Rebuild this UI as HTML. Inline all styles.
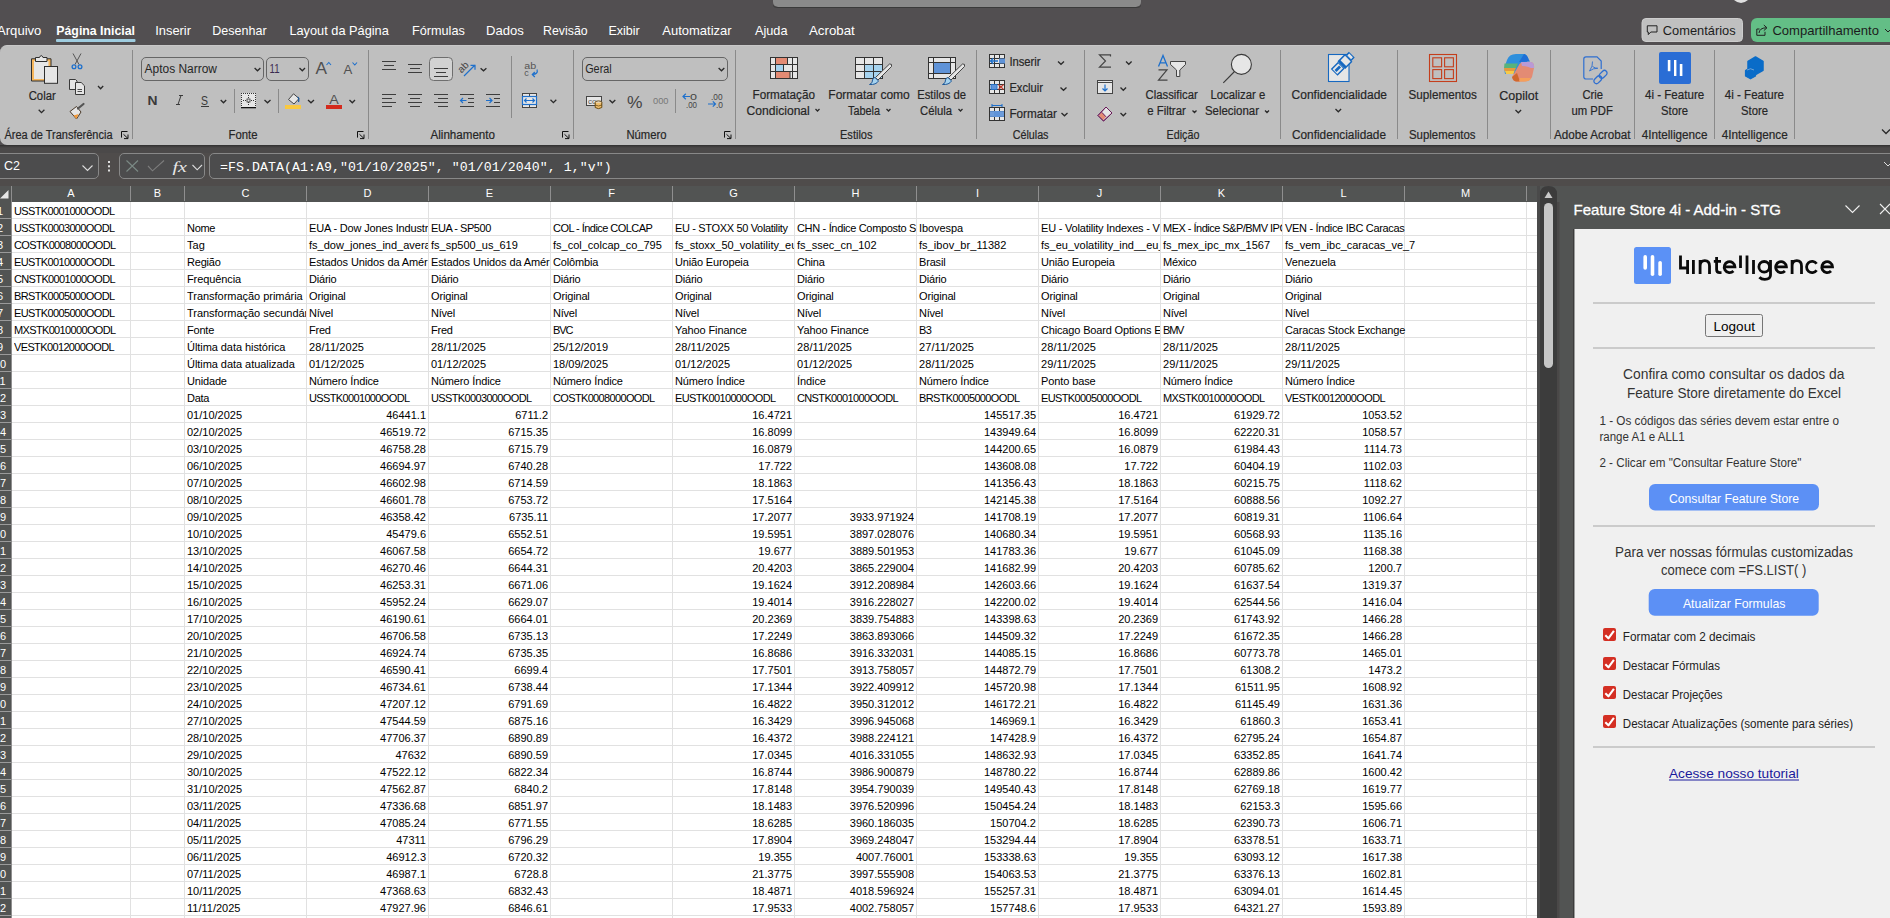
<!DOCTYPE html>
<html><head><meta charset="utf-8">
<style>
*{box-sizing:border-box}
html,body{margin:0;padding:0}
body{width:1890px;height:918px;overflow:hidden;position:relative;background:#524f51;font-family:"Liberation Sans",sans-serif;color:#fff}
.a{position:absolute}
.tab{position:absolute;top:23px;font-size:13px;line-height:15px;color:#fff;white-space:nowrap}
.rib{position:absolute;left:0;top:45px;width:1900px;height:100px;background:#bfbfbf;border-top:1px solid #c8c8c8;border-radius:7px 0 0 7px}
.sep{position:absolute;top:50px;width:1px;height:89px;background:#8e8e8e}
.gl{position:absolute;top:128px;font-size:12px;line-height:14px;color:#202020;white-space:nowrap}
.bl{position:absolute;font-size:12px;line-height:16px;color:#202020;white-space:nowrap;text-align:center}
.fbar{position:absolute;left:0;top:145px;width:1890px;height:41px;background:#4f4c4b}
.box{position:absolute;top:153px;height:26px;border:1px solid #888;border-radius:5px;background:#4c4c4d}
.sheet{position:absolute;left:0;top:202px;width:1537px;height:716px;background:#fff;overflow:hidden;
 background-image:repeating-linear-gradient(to bottom,transparent 0,transparent 16px,#e1e1e1 16px,#e1e1e1 17px)}
.colh{position:absolute;left:0;top:186px;width:1537px;height:16px;background:#525453}
.ch{position:absolute;top:186px;height:15px;font-size:11px;line-height:15px;text-align:center;color:#fff}
.vl{position:absolute;top:202px;width:1px;height:716px;background:#e1e1e1}
.hvl{position:absolute;top:186px;width:1px;height:15px;background:#8f8f8f}
.rh{position:absolute;left:0;top:202px;width:11px;height:716px;background:#525453;
 background-image:repeating-linear-gradient(to bottom,transparent 0,transparent 16px,#9a9a9a 16px,#9a9a9a 17px)}
.rn{position:absolute;left:-20px;width:40px;height:16px;text-align:center;font-size:11px;line-height:19px;overflow:hidden;color:#fff}
.c{position:absolute;height:16px;font-size:11px;line-height:19px;color:#000;white-space:nowrap;overflow:hidden}
.c.r{text-align:right}
.c.n{letter-spacing:-0.2px}
.c.k{letter-spacing:-0.6px}
.pane{position:absolute;left:1574px;top:229px;width:316px;height:689px;background:#f0f0f0;color:#222}
</style></head><body>
<!-- top bar -->
<svg class="a" style="left:0;top:0" width="1890" height="45" viewBox="0 0 1890 45" font-family="Liberation Sans, sans-serif">
<rect x="773" y="-6" width="368" height="13" rx="5" fill="#8a8a8a"/>
<path d="M773 5.5 Q774 7.5 778 7.5 H1136 Q1140 7.5 1141 5.5" fill="none" stroke="#3a3a3a" stroke-width="1"/>
<path d="M1734 0 Q1741 6 1748 0 Z" fill="#e0e0e0"/>
<g fill="#fff" font-size="13">
<text x="-3" y="34.8" textLength="44.4" lengthAdjust="spacingAndGlyphs">Arquivo</text>
<text x="56.3" y="34.8" textLength="78.7" lengthAdjust="spacingAndGlyphs" font-weight="bold">Página Inicial</text>
<text x="155.3" y="34.8" textLength="35.7" lengthAdjust="spacingAndGlyphs">Inserir</text>
<text x="212.3" y="34.8" textLength="54.3" lengthAdjust="spacingAndGlyphs">Desenhar</text>
<text x="289.4" y="34.8" textLength="99.4" lengthAdjust="spacingAndGlyphs">Layout da Página</text>
<text x="412" y="34.8" textLength="52.8" lengthAdjust="spacingAndGlyphs">Fórmulas</text>
<text x="486" y="34.8" textLength="37.8" lengthAdjust="spacingAndGlyphs">Dados</text>
<text x="543.1" y="34.8" textLength="44.5" lengthAdjust="spacingAndGlyphs">Revisão</text>
<text x="608.4" y="34.8" textLength="31.3" lengthAdjust="spacingAndGlyphs">Exibir</text>
<text x="662.3" y="34.8" textLength="69.3" lengthAdjust="spacingAndGlyphs">Automatizar</text>
<text x="755" y="34.8" textLength="32.5" lengthAdjust="spacingAndGlyphs">Ajuda</text>
<text x="809" y="34.8" textLength="45.8" lengthAdjust="spacingAndGlyphs">Acrobat</text>
</g>
<rect x="56" y="39" width="79.5" height="3" rx="1" fill="#9fcde0"/>
<rect x="1642" y="18.5" width="100.5" height="23" rx="4" fill="#c0c0c0" stroke="#cdcdcd" stroke-width="1"/>
<path d="M1647.3 25.8 H1657 V32 H1650.8 L1648.3 34.6 V32 H1647.3 Z" fill="none" stroke="#222" stroke-width="1"/>
<text x="1662.8" y="34.9" font-size="13" fill="#1c1c1c" textLength="72.8" lengthAdjust="spacingAndGlyphs">Comentários</text>
<rect x="1751" y="18" width="160" height="24" rx="6" fill="#63be86"/>
<path d="M1759.5 29 H1756.8 V35.3 H1765 V31.8" fill="none" stroke="#222" stroke-width="1"/>
<path d="M1759 33 Q1759.5 28 1766 27.8 M1763.8 25 L1767 27.8 L1763.8 30.6" fill="none" stroke="#222" stroke-width="1"/>
<text x="1772.4" y="34.9" font-size="13" fill="#1c1c1c" textLength="106.6" lengthAdjust="spacingAndGlyphs">Compartilhamento</text>
<path d="M1885 29 L1888 32 L1891 29" fill="none" stroke="#222" stroke-width="1"/>
</svg>


<!-- ribbon -->
<div class="rib"></div>
<svg class="a" style="left:0;top:0" width="1890" height="145" viewBox="0 0 1890 145" font-family="Liberation Sans, sans-serif">
<g fill="#262626" stroke="#262626" stroke-width="0.2" font-size="12">
<text x="4.5" y="139" textLength="108" lengthAdjust="spacingAndGlyphs">Área de Transferência</text>
<text x="228.5" y="139" textLength="29" lengthAdjust="spacingAndGlyphs">Fonte</text>
<text x="430.5" y="139" textLength="64.5" lengthAdjust="spacingAndGlyphs">Alinhamento</text>
<text x="626.5" y="139" textLength="40" lengthAdjust="spacingAndGlyphs">Número</text>
<text x="840" y="139" textLength="32.5" lengthAdjust="spacingAndGlyphs">Estilos</text>
<text x="1012.7" y="139" textLength="35.8" lengthAdjust="spacingAndGlyphs">Células</text>
<text x="1166.6" y="139" textLength="32.8" lengthAdjust="spacingAndGlyphs">Edição</text>
<text x="1292" y="139" textLength="94" lengthAdjust="spacingAndGlyphs">Confidencialidade</text>
<text x="1409" y="139" textLength="66.5" lengthAdjust="spacingAndGlyphs">Suplementos</text>
<text x="1554" y="139" textLength="76.4" lengthAdjust="spacingAndGlyphs">Adobe Acrobat</text>
<text x="1641.7" y="139" textLength="65.8" lengthAdjust="spacingAndGlyphs">4Intelligence</text>
<text x="1721.7" y="139" textLength="66.1" lengthAdjust="spacingAndGlyphs">4Intelligence</text>
</g>
<g fill="#262626" stroke="#262626" stroke-width="0.2" font-size="12.5">
<text x="28.7" y="99.8" textLength="27" lengthAdjust="spacingAndGlyphs">Colar</text>
<text x="752.5" y="99" textLength="62.5" lengthAdjust="spacingAndGlyphs">Formatação</text>
<text x="746.6" y="114.7" textLength="63.2" lengthAdjust="spacingAndGlyphs">Condicional</text>
<text x="828.3" y="99" textLength="81.5" lengthAdjust="spacingAndGlyphs">Formatar como</text>
<text x="848" y="114.7" textLength="32" lengthAdjust="spacingAndGlyphs">Tabela</text>
<text x="917.2" y="99" textLength="48.8" lengthAdjust="spacingAndGlyphs">Estilos de</text>
<text x="920" y="114.7" textLength="32" lengthAdjust="spacingAndGlyphs">Célula</text>
<text x="1009.4" y="66.3" textLength="31.2" lengthAdjust="spacingAndGlyphs">Inserir</text>
<text x="1009.4" y="92.2" textLength="33.6" lengthAdjust="spacingAndGlyphs">Excluir</text>
<text x="1009.4" y="118" textLength="47.6" lengthAdjust="spacingAndGlyphs">Formatar</text>
<text x="1145.6" y="99" textLength="52.1" lengthAdjust="spacingAndGlyphs">Classificar</text>
<text x="1147.2" y="114.7" textLength="38.6" lengthAdjust="spacingAndGlyphs">e Filtrar</text>
<text x="1210.4" y="99" textLength="54.9" lengthAdjust="spacingAndGlyphs">Localizar e</text>
<text x="1205" y="114.7" textLength="54" lengthAdjust="spacingAndGlyphs">Selecionar</text>
<text x="1291.6" y="98.7" textLength="95.4" lengthAdjust="spacingAndGlyphs">Confidencialidade</text>
<text x="1408.5" y="99" textLength="68.3" lengthAdjust="spacingAndGlyphs">Suplementos</text>
<text x="1499.3" y="99.5" textLength="38.9" lengthAdjust="spacingAndGlyphs">Copilot</text>
<text x="1582.4" y="98.9" textLength="20.6" lengthAdjust="spacingAndGlyphs">Crie</text>
<text x="1571.5" y="114.7" textLength="41.4" lengthAdjust="spacingAndGlyphs">um PDF</text>
<text x="1645" y="98.9" textLength="59.2" lengthAdjust="spacingAndGlyphs">4i - Feature</text>
<text x="1661" y="114.7" textLength="27" lengthAdjust="spacingAndGlyphs">Store</text>
<text x="1724.8" y="98.9" textLength="59.2" lengthAdjust="spacingAndGlyphs">4i - Feature</text>
<text x="1741" y="114.7" textLength="27" lengthAdjust="spacingAndGlyphs">Store</text>
</g>
<!-- separators -->
<g fill="#8a8a8a">
<rect x="132" y="50" width="1" height="89"/><rect x="368" y="50" width="1" height="89"/><rect x="573" y="50" width="1" height="89"/>
<rect x="735" y="50" width="1" height="89"/><rect x="976" y="50" width="1" height="89"/><rect x="1084" y="50" width="1" height="89"/>
<rect x="1280" y="50" width="1" height="89"/><rect x="1397" y="50" width="1" height="89"/><rect x="1487" y="50" width="1" height="89"/>
<rect x="1550" y="50" width="1" height="89"/><rect x="1634" y="50" width="1" height="89"/><rect x="1714" y="50" width="1" height="89"/>
<rect x="1794" y="50" width="1" height="89"/>
<rect x="234" y="89" width="1" height="24"/><rect x="278" y="89" width="1" height="24"/>
<rect x="511" y="56" width="1" height="62"/><rect x="675" y="89" width="1" height="24"/>
</g>
<!-- chevrons -->
<g fill="none" stroke="#2a2a2a" stroke-width="1.3">
<path d="M38.7 109.8 L41.5 112.6 L44.4 109.8"/>
<path d="M98 86 L100.6 88.7 L103.2 86"/>
<path d="M254.6 68 L257.5 70.8 L260.4 68"/>
<path d="M299.5 68 L302.3 70.8 L305 68"/>
<path d="M220.7 100 L223.5 102.8 L226.2 100"/>
<path d="M264.5 100 L267.5 102.8 L270.5 100"/>
<path d="M308 100 L311 102.8 L314 100"/>
<path d="M349.5 100 L352.3 102.8 L355 100"/>
<path d="M480.6 68.2 L483.5 70.8 L486.4 68.2"/>
<path d="M550.5 99.7 L553.4 102.6 L556.3 99.7"/>
<path d="M718.6 68 L721.5 70.8 L724.3 68"/>
<path d="M609.5 100 L612.4 102.8 L615.3 100"/>
<path d="M815.5 109 L817.5 111 L819.5 109"/>
<path d="M886.5 109 L888.5 111 L890.5 109"/>
<path d="M958.5 109 L960.5 111 L962.5 109"/>
<path d="M1058 61.5 L1061 64.3 L1064 61.5"/>
<path d="M1060.5 87.5 L1063.5 90.3 L1066.5 87.5"/>
<path d="M1061.5 113 L1064.5 115.8 L1067.5 113"/>
<path d="M1126 61.5 L1128.8 64.3 L1131.6 61.5"/>
<path d="M1120.5 87.5 L1123.3 90.3 L1126.1 87.5"/>
<path d="M1120.5 113 L1123.3 115.8 L1126.1 113"/>
<path d="M1192.5 110.5 L1194.5 112.5 L1196.5 110.5"/>
<path d="M1265 110.5 L1267 112.5 L1269 110.5"/>
<path d="M1335.5 109 L1338.3 111.8 L1341.1 109"/>
<path d="M1515.5 110 L1518.3 112.8 L1521.1 110"/>
<path d="M1882 129.5 L1886 133.5 L1890 129.5"/>
</g>
<!-- Clipboard: Colar -->
<path d="M31.5 58.8 H51 V81 H31.5 Z" fill="#f6b65c" stroke="#2e2e2e" stroke-width="1"/>
<rect x="34" y="61" width="14.5" height="18" fill="#e6e6e6"/>
<path d="M35.5 61.5 V57.5 H39.5 Q41.2 53.5 43 57.5 H47 V61.5 Z" fill="#e8e8e8" stroke="#2e2e2e" stroke-width="1"/>
<rect x="44.5" y="66.5" width="13" height="16.8" fill="#e6e6e6" stroke="#2e2e2e" stroke-width="1"/>
<!-- scissors -->
<g stroke="#555" stroke-width="1" fill="none">
<path d="M73 53.5 L79 64.5 M81 53.5 L75 64.5"/>
<circle cx="74" cy="66.8" r="1.9" stroke="#1e70cc" stroke-width="1.3"/>
<circle cx="80" cy="66.8" r="1.9" stroke="#1e70cc" stroke-width="1.3"/>
</g>
<!-- copy -->
<path d="M69.5 79.5 H75.5 L77 81 V89.5 H69.5 Z" fill="#e6e6e6" stroke="#3a3a3a" stroke-width="1"/>
<path d="M75.5 82.5 H81.2 L84.5 85.8 V94.5 H75.5 Z" fill="#e6e6e6" stroke="#3a3a3a" stroke-width="1"/>
<path d="M77.5 89.5 H82 M77.5 91.5 H82" stroke="#3a3a3a" stroke-width="0.9"/>
<!-- format painter -->
<path d="M70 111.5 L76.5 106.5 L81 112 L76.5 119 Z" fill="#e6e6e6" stroke="#4a3a2a" stroke-width="1"/>
<path d="M73.5 115.5 L78.5 114 L76.5 119 Z" fill="#f39a3a"/>
<path d="M78 108.5 L83.5 104" stroke="#555" stroke-width="2.2" stroke-linecap="round"/>
<!-- Font box -->
<rect x="141.5" y="57.5" width="122" height="23" rx="4.5" fill="none" stroke="#666" stroke-width="1"/>
<rect x="266.5" y="57.5" width="42" height="23" rx="4.5" fill="none" stroke="#666" stroke-width="1"/>
<text x="144.6" y="72.5" font-size="12.5" fill="#262626" textLength="72.4" lengthAdjust="spacingAndGlyphs">Aptos Narrow</text>
<text x="269.5" y="73" font-size="12.5" fill="#3a2a50" textLength="10" lengthAdjust="spacingAndGlyphs">11</text>
<text x="315.5" y="73.7" font-size="17" fill="#505050" textLength="11.5" lengthAdjust="spacingAndGlyphs">A</text>
<path d="M326.5 65 L328.8 62.5 L331 65" fill="none" stroke="#1e70cc" stroke-width="1.1"/>
<text x="343.5" y="73.7" font-size="13" fill="#505050" textLength="8.8" lengthAdjust="spacingAndGlyphs">A</text>
<path d="M352.5 62.5 L354.8 65 L357 62.5" fill="none" stroke="#1e70cc" stroke-width="1.1"/>
<!-- N I S -->
<text x="147.5" y="105" font-size="13.5" font-weight="bold" fill="#3a3a3a" textLength="10" lengthAdjust="spacingAndGlyphs">N</text>
<path d="M179 95.5 H183 M176 104.5 H180 M181 95.5 L178 104.5" stroke="#3a3a3a" stroke-width="1" fill="none"/>
<text x="201" y="105" font-size="13.5" fill="#3a3a3a" textLength="7" lengthAdjust="spacingAndGlyphs">S</text>
<rect x="201" y="106" width="8" height="1" fill="#3a3a3a"/>
<!-- borders -->
<g fill="#333">
<rect x="241" y="93" width="15" height="14" fill="#e6e6e6"/>
<path d="M241 93h1v1h-1zM243 93h1v1h-1zM245 93h1v1h-1zM247 93h1v1h-1zM249 93h1v1h-1zM251 93h1v1h-1zM253 93h1v1h-1zM255 93h1v1h-1z"/>
<path d="M241 95h1v1h-1zM241 97h1v1h-1zM241 99h1v1h-1zM241 101h1v1h-1zM241 103h1v1h-1zM241 105h1v1h-1z"/>
<path d="M255 95h1v1h-1zM255 97h1v1h-1zM255 99h1v1h-1zM255 101h1v1h-1zM255 103h1v1h-1zM255 105h1v1h-1z"/>
<path d="M248 95h1v1h-1zM248 97h1v1h-1zM248 102h1v1h-1zM248 104h1v1h-1zM243 100h1v1h-1zM245 100h1v1h-1zM251 100h1v1h-1zM253 100h1v1h-1z"/>
<rect x="247" y="99" width="3" height="3" fill="none" stroke="#333" stroke-width="0.8"/>
<rect x="241" y="107" width="15" height="1.3" fill="#111"/>
</g>
<!-- fill color -->
<path d="M288.5 99.5 L293.5 93.8 L299 98.5 L294 104 Z" fill="#e6e6e6" stroke="#444" stroke-width="1"/>
<path d="M297.5 97 Q299.5 98 298.5 102" stroke="#1f5a9a" stroke-width="1.3" fill="none"/>
<rect x="285" y="105" width="16" height="4" fill="#f9c940"/>
<!-- font color -->
<text x="329.3" y="104" font-size="13" fill="#505050" textLength="9.5" lengthAdjust="spacingAndGlyphs">A</text>
<rect x="326" y="105" width="16" height="4" fill="#d42b1e"/>
<!-- Alignment row 1 -->
<g fill="#3d3d3d">
<rect x="382" y="61" width="14" height="1"/><rect x="384" y="65" width="10" height="1"/><rect x="382" y="69" width="14" height="1"/>
<rect x="408" y="64" width="14" height="1"/><rect x="410" y="68" width="10" height="1"/><rect x="408" y="72" width="14" height="1"/>
</g>
<rect x="429.5" y="57.5" width="23" height="23" rx="4" fill="#d2d2d2" stroke="#6e6e6e" stroke-width="1"/>
<g fill="#3d3d3d">
<rect x="434" y="68" width="14" height="1"/><rect x="436" y="72" width="10" height="1"/><rect x="434" y="76" width="14" height="1"/>
<!-- row 2 -->
<rect x="382" y="94" width="14" height="1"/><rect x="382" y="98" width="10" height="1"/><rect x="382" y="102" width="14" height="1"/><rect x="382" y="106" width="10" height="1"/>
<rect x="408" y="94" width="14" height="1"/><rect x="410" y="98" width="10" height="1"/><rect x="408" y="102" width="14" height="1"/><rect x="410" y="106" width="10" height="1"/>
<rect x="434" y="94" width="14" height="1"/><rect x="438" y="98" width="10" height="1"/><rect x="434" y="102" width="14" height="1"/><rect x="438" y="106" width="10" height="1"/>
<rect x="460" y="94" width="14" height="1"/><rect x="468" y="98" width="6" height="1"/><rect x="468" y="102" width="6" height="1"/><rect x="460" y="106" width="14" height="1"/>
<rect x="486" y="94" width="14" height="1"/><rect x="494" y="98" width="6" height="1"/><rect x="494" y="102" width="6" height="1"/><rect x="486" y="106" width="14" height="1"/>
</g>
<g stroke="#1e70cc" stroke-width="1.2" fill="none">
<path d="M466.5 100.5 H460.5 M463 98 L460.5 100.5 L463 103"/>
<path d="M486 100.5 H492 M489.5 98 L492 100.5 L489.5 103"/>
<path d="M464 76 L475 65 M470.5 65.3 H475 V69.8"/>
</g>
<text x="0" y="0" font-size="10" fill="#444" transform="translate(461.5 73.5) rotate(-45)">ab</text>
<!-- wrap text -->
<text x="524.3" y="68.5" font-size="9" fill="#555" textLength="11.9" lengthAdjust="spacingAndGlyphs">ab</text>
<text x="524.3" y="75.5" font-size="9" fill="#555">c</text>
<path d="M537 69.5 Q538.5 74 532.5 74.5 M534.8 72 L532.3 74.5 L534.8 77" stroke="#1e70cc" stroke-width="1.2" fill="none"/>
<!-- merge -->
<rect x="522.5" y="93.5" width="14" height="14" fill="#e6e6e6" stroke="#444" stroke-width="1"/>
<path d="M529.5 93.5 V107.5 M522.5 96.5 H536.5 M522.5 104.5 H536.5" stroke="#444" stroke-width="1"/>
<rect x="522.5" y="96.5" width="14" height="8" fill="#e6e6e6" stroke="#1e70cc" stroke-width="1.2"/>
<path d="M524.5 100.5 H534.5 M526.5 98.5 L524.5 100.5 L526.5 102.5 M532.5 98.5 L534.5 100.5 L532.5 102.5" stroke="#1e70cc" stroke-width="1.2" fill="none"/>
</svg>
<svg class="a" style="left:0;top:0" width="1890" height="145" viewBox="0 0 1890 145" font-family="Liberation Sans, sans-serif">
<!-- Number group -->
<rect x="582.5" y="57.5" width="145" height="23" rx="4.5" fill="none" stroke="#666" stroke-width="1"/>
<text x="585.2" y="72.5" font-size="12.5" fill="#262626" textLength="26.5" lengthAdjust="spacingAndGlyphs">Geral</text>
<rect x="586.5" y="96.5" width="15" height="9" fill="#e6e6e6" stroke="#444" stroke-width="1"/>
<text x="588" y="104" font-size="8" fill="#555">co</text>
<ellipse cx="598.5" cy="102.5" rx="3.3" ry="1.6" fill="#e6e6e6" stroke="#6a4a10" stroke-width="1"/>
<path d="M595.2 102.5 V107.5 Q598.5 109.8 601.8 107.5 V102.5" fill="#f0c070" stroke="#6a4a10" stroke-width="1"/>
<path d="M595.2 105 Q598.5 107 601.8 105" fill="none" stroke="#6a4a10" stroke-width="0.8"/>
<text x="627" y="107.6" font-size="17" fill="#444" textLength="15.5" lengthAdjust="spacingAndGlyphs">%</text>
<text x="653" y="104" font-size="9.5" fill="#777" textLength="15.5" lengthAdjust="spacingAndGlyphs">000</text>
<g fill="#444" font-size="9">
<text x="690" y="99.8" textLength="7" lengthAdjust="spacingAndGlyphs">0</text>
<text x="686" y="107.6" textLength="11" lengthAdjust="spacingAndGlyphs">.00</text>
<text x="711" y="99.8" textLength="11.5" lengthAdjust="spacingAndGlyphs">.00</text>
<text x="716" y="107.6" textLength="7" lengthAdjust="spacingAndGlyphs">.0</text>
</g>
<g stroke="#1e70cc" stroke-width="1.2" fill="none">
<path d="M683 96.5 H690 M685.8 93.8 L683 96.5 L685.8 99.2"/>
<path d="M708 104 H715.5 M712.8 101.3 L715.5 104 L712.8 106.7"/>
</g>
<!-- Styles: conditional formatting -->
<g stroke="#333" stroke-width="1">
<rect x="770.5" y="57.5" width="27" height="21" fill="#e6e6e6"/>
<rect x="775.5" y="57.5" width="12" height="7" fill="#e38b74"/>
<rect x="775.5" y="64.5" width="8" height="7" fill="#a6d3ef"/>
<rect x="775.5" y="71.5" width="14.5" height="7" fill="#e38b74"/>
<path d="M792.5 57.5 V78.5 M770.5 64.5 H797.5 M770.5 71.5 H797.5"/>
</g>
<!-- format as table -->
<g stroke="#333" stroke-width="1">
<rect x="855.5" y="57.5" width="27" height="21" fill="#e6e6e6"/>
<rect x="864.5" y="64.5" width="18" height="14" fill="#a6d3ef"/>
<path d="M864.5 57.5 V78.5 M873.5 57.5 V78.5 M855.5 64.5 H882.5 M855.5 71.5 H882.5"/>
</g>
<path d="M889.5 64 Q892.5 63.5 891.5 66.5 L878 80 L875.5 77.5 Z" fill="#e6e6e6" stroke="#444" stroke-width="1"/>
<path d="M875 77.5 L878.5 81 Q876 85 869.5 84.5 Q873 83 872.5 80 Q873 77.5 875 77.5 Z" fill="#a6d3ef" stroke="#1f5a9a" stroke-width="1"/>
<!-- cell styles -->
<g stroke="#333" stroke-width="1">
<rect x="928.5" y="57.5" width="27" height="21" fill="#e6e6e6"/>
<rect x="933.5" y="62.5" width="17" height="11" fill="#5f93d8"/>
<path d="M933.5 57.5 V62.5 M950.5 57.5 V62.5 M928.5 62.5 H933.5 M950.5 62.5 H955.5 M933.5 73.5 V78.5 M928.5 73.5 H933.5"/>
</g>
<path d="M962.5 64 Q965.5 63.5 964.5 66.5 L951 80 L948.5 77.5 Z" fill="#e6e6e6" stroke="#444" stroke-width="1"/>
<path d="M948 77.5 L951.5 81 Q949 85 942.5 84.5 Q946 83 945.5 80 Q946 77.5 948 77.5 Z" fill="#a6d3ef" stroke="#1f5a9a" stroke-width="1"/>
<!-- Cells: insert -->
<g stroke="#333" stroke-width="1" fill="#e6e6e6">
<rect x="989.5" y="54.5" width="15" height="13"/>
<path d="M994.5 54.5 V67.5 M999.5 54.5 V67.5 M989.5 58.5 H1004.5 M989.5 63.5 H1004.5" fill="none"/>
<rect x="989.5" y="80.5" width="15" height="13"/>
<path d="M994.5 80.5 V93.5 M999.5 80.5 V93.5 M989.5 84.5 H1004.5 M989.5 89.5 H1004.5" fill="none"/>
<rect x="989.5" y="107.5" width="15" height="13"/>
<path d="M994.5 107.5 V120.5 M999.5 107.5 V120.5 M989.5 111.5 H1004.5 M989.5 116.5 H1004.5" fill="none"/>
</g>
<rect x="999" y="58.5" width="6" height="5" fill="#5f93d8"/>
<path d="M998 61 H990.5 M993.3 58.2 L990.5 61 L993.3 63.8" stroke="#1e70cc" stroke-width="1.3" fill="none"/>
<rect x="991" y="84.5" width="6" height="5" fill="#5f93d8" stroke="#1e70cc" stroke-width="0.8"/>
<path d="M998.5 84.5 L1003.5 89.5 M1003.5 84.5 L998.5 89.5" stroke="#c0392b" stroke-width="1.1"/>
<rect x="994" y="111" width="6" height="6" fill="#5f93d8"/>
<rect x="990" y="111" width="14" height="6" fill="#5f93d8" opacity="0.9"/>
<path d="M992 105.5 H1002 M992 104 V107 M1002 104 V107" stroke="#1e70cc" stroke-width="1.1" fill="none"/>
<!-- Editing -->
<path d="M1110.5 56.5 V54.8 H1099.5 L1105.5 61 L1099.5 67.2 H1111" fill="none" stroke="#444" stroke-width="1.2"/>
<rect x="1097.5" y="80.5" width="15" height="13" fill="#e6e6e6" stroke="#444" stroke-width="1"/>
<path d="M1097.5 82.5 H1112.5" stroke="#444" stroke-width="1"/>
<path d="M1105 84.5 V91 M1102.5 88.5 L1105 91 L1107.5 88.5" fill="none" stroke="#1e70cc" stroke-width="1.2"/>
<path d="M1098 115.5 L1106 107 L1112 113 L1103.5 121 Z" fill="#e6e6e6" stroke="#6a1b5a" stroke-width="1"/>
<path d="M1098.8 115.5 L1101.8 112.3 L1106 116.8 L1103.3 120 Z" fill="#e38b74"/>
<path d="M1098 115.5 L1106 107 L1112 113 L1103.5 121 Z M1101.8 112.3 L1106 116.8" fill="none" stroke="#6a1b5a" stroke-width="1"/>
<!-- sort filter -->
<path d="M1158.5 66.5 L1163 55.5 L1167.5 66.5 M1160 62.8 H1166" fill="none" stroke="#1e70cc" stroke-width="1.3"/>
<path d="M1158.5 69.8 H1167 L1158.5 80.2 H1167.5" fill="none" stroke="#444" stroke-width="1.2"/>
<path d="M1170.5 61.5 H1185.5 V64.5 L1179.8 70 V76.5 H1176.5 V70 L1170.5 64.5 Z" fill="#e6e6e6" stroke="#444" stroke-width="1"/>
<!-- find -->
<circle cx="1241.4" cy="64.4" r="10" fill="#e6e6e6" stroke="#3a3a3a" stroke-width="1.1"/>
<path d="M1234.5 71.5 L1223.3 82.8" stroke="#3a3a3a" stroke-width="1.1"/>
<!-- confidentiality -->
<rect x="1328.5" y="54.5" width="20.5" height="27" fill="#e6e6e6" stroke="#1668c0" stroke-width="1.1"/>
<g transform="translate(1343 63.5) rotate(-45) scale(0.92 1.35)">
<rect x="-2" y="-3.5" width="10" height="7" fill="#e6e6e6" stroke="#1668c0" stroke-width="1.1"/>
<rect x="-2" y="-3.5" width="2.5" height="7" fill="#1668c0"/>
<rect x="9" y="-2.5" width="4" height="5" fill="#e6e6e6" stroke="#1668c0" stroke-width="1.1"/>
<rect x="-13" y="-3" width="10" height="6" fill="#e6e6e6" stroke="#1668c0" stroke-width="1.1"/>
<rect x="-11.5" y="-1" width="7" height="2" fill="#1668c0"/>
</g>
<!-- suplementos -->
<g fill="none" stroke="#c43e1c" stroke-width="1.1">
<rect x="1429.5" y="54.5" width="27" height="27"/>
<rect x="1432.8" y="57.8" width="8.8" height="9"/>
<rect x="1444.6" y="57.8" width="8.8" height="9"/>
<rect x="1432.8" y="69.6" width="8.8" height="9"/>
<rect x="1444.6" y="69.6" width="8.8" height="9"/>
</g>
<!-- copilot -->
<path d="M1507 60 Q1509 54 1516 54 L1524 54 Q1527 54.5 1528.5 59 L1521 72 Q1519 74 1515 74 L1505 74 Q1503.5 68 1507 60 Z" fill="#2e8fdc"/>
<path d="M1524 54 Q1527 54.5 1528.5 59 L1530 61.5 L1519 62 Z" fill="#1f6fd6"/>
<path d="M1504.5 63.5 L1518 63.5 L1516 68 L1504 68 Z" fill="#58b37a"/>
<path d="M1504 68 L1516 68 L1514.5 71 L1504.5 71 Z" fill="#e49a3c"/>
<path d="M1505 71 L1514.5 71 L1513.5 74 L1506 74 Z" fill="#f7c948"/>
<path d="M1531 62 Q1534.5 62.5 1534 68 L1532 77 Q1530 81.5 1524 81.5 L1516 81.5 Q1513 81 1512 77 L1519.5 64 Q1521 62 1524 62 Z" fill="#e38b74"/>
<path d="M1521 62 L1531 62 Q1534.5 62.5 1534 68 L1531 68 Q1527 66 1522 66 Z" fill="#b99ad6"/>
<path d="M1512 77 L1517 73 L1520 81.5 L1516 81.5 Q1513 81 1512 77 Z" fill="#d0682e"/>
<path d="M1520 78 L1531 78 Q1530 81.5 1524 81.5 L1519 81.5 Z" fill="#f5a05a"/>
<!-- PDF -->
<path d="M1593 79 H1586 Q1583.8 79 1583.8 76.8 V59 Q1583.8 56.8 1586 56.8 H1597 L1601.2 61 V69" fill="none" stroke="#2f6fd0" stroke-width="1.2"/>
<path d="M1592.5 61.5 Q1593 66 1589.5 71 M1592.5 66.5 Q1595.5 68.5 1598 68.3 M1589.5 71 Q1593.5 68 1597.5 68.3" fill="none" stroke="#2f6fd0" stroke-width="0.9"/>
<g transform="translate(1601 76.5) rotate(-45)" fill="none" stroke="#2f6fd0" stroke-width="1.3">
<rect x="-9" y="-2.6" width="9" height="5.2" rx="2.6"/>
<rect x="-1.5" y="-2.6" width="9" height="5.2" rx="2.6"/>
</g>
<!-- 4i -->
<rect x="1659" y="52" width="32" height="32" rx="2" fill="#2a6dd5"/>
<rect x="1667.8" y="60" width="2.6" height="11.2" fill="#fff"/>
<rect x="1674" y="60" width="2.4" height="16" fill="#fff"/>
<rect x="1679.8" y="64" width="2.6" height="12" fill="#fff"/>
<path d="M1755.5 57 L1763 61.3 V70.3 L1755.5 74.6 L1748 70.3 V61.3 Z" fill="#0a6cc8" stroke="#0a6cc8" stroke-width="1.5" stroke-linejoin="round"/>
<path d="M1750.5 67.5 L1755.5 70.4 V76 L1750.5 78.8 L1745.5 76 V70.4 Z" fill="#0a6cc8" stroke="#0a6cc8" stroke-width="1.2" stroke-linejoin="round"/>
<path d="M1747 70 Q1750.5 67.5 1754 70" fill="none" stroke="#b8c8d8" stroke-width="0.6"/>
<!-- launchers -->
<path d="M121.5 137.6 V131.5 H127.5 M123.5 134.3 L128 138.5 M128 134.5 V138.6 H124" fill="none" stroke="#111" stroke-width="1"/>
<path d="M357.5 137.6 V131.5 H363.5 M359.5 134.3 L364 138.5 M364 134.5 V138.6 H360" fill="none" stroke="#111" stroke-width="1"/>
<path d="M562.5 137.6 V131.5 H568.5 M564.5 134.3 L569 138.5 M569 134.5 V138.6 H565" fill="none" stroke="#111" stroke-width="1"/>
<path d="M724.5 137.6 V131.5 H730.5 M726.5 134.3 L731 138.5 M731 134.5 V138.6 H727" fill="none" stroke="#111" stroke-width="1"/>
</svg>



<!-- formula bar -->
<div class="fbar"></div>
<div class="a" style="left:0;top:145px;width:1890px;height:8px;background:linear-gradient(#2e2e2e 0,#3c3a3a 1px,#4b4949 3px,#4b4949 8px)"></div>
<div class="box" style="left:-6px;width:105px"></div>
<div class="a" style="left:4px;top:159px;font-size:12.5px;line-height:15px;color:#fff">C2</div>
<div class="box" style="left:119px;width:86px"></div>
<div class="box" style="left:209px;width:1700px"></div>
<div class="a" style="left:220px;top:160px;font-family:'Liberation Mono',monospace;font-size:13.2px;letter-spacing:0.08px;line-height:15px;color:#fff;white-space:pre">=FS.DATA(A1:A9,"01/10/2025", "01/01/2040", 1,"v")</div>

<!-- sheet -->
<div class="colh"></div>
<div class="ch" style="left:12px;width:118px">A</div>
<div class="ch" style="left:131px;width:53px">B</div>
<div class="ch" style="left:185px;width:121px">C</div>
<div class="ch" style="left:307px;width:121px">D</div>
<div class="ch" style="left:429px;width:121px">E</div>
<div class="ch" style="left:551px;width:121px">F</div>
<div class="ch" style="left:673px;width:121px">G</div>
<div class="ch" style="left:795px;width:121px">H</div>
<div class="ch" style="left:917px;width:121px">I</div>
<div class="ch" style="left:1039px;width:121px">J</div>
<div class="ch" style="left:1161px;width:121px">K</div>
<div class="ch" style="left:1283px;width:121px">L</div>
<div class="ch" style="left:1405px;width:121px">M</div>
<div class="sheet"></div>
<div class="vl" style="left:130px"></div><div class="hvl" style="left:130px"></div>
<div class="vl" style="left:184px"></div><div class="hvl" style="left:184px"></div>
<div class="vl" style="left:306px"></div><div class="hvl" style="left:306px"></div>
<div class="vl" style="left:428px"></div><div class="hvl" style="left:428px"></div>
<div class="vl" style="left:550px"></div><div class="hvl" style="left:550px"></div>
<div class="vl" style="left:672px"></div><div class="hvl" style="left:672px"></div>
<div class="vl" style="left:794px"></div><div class="hvl" style="left:794px"></div>
<div class="vl" style="left:916px"></div><div class="hvl" style="left:916px"></div>
<div class="vl" style="left:1038px"></div><div class="hvl" style="left:1038px"></div>
<div class="vl" style="left:1160px"></div><div class="hvl" style="left:1160px"></div>
<div class="vl" style="left:1282px"></div><div class="hvl" style="left:1282px"></div>
<div class="vl" style="left:1404px"></div><div class="hvl" style="left:1404px"></div>
<div class="vl" style="left:1526px"></div><div class="hvl" style="left:1526px"></div>
<div class="rh"></div>
<div class="a" style="left:11px;top:186px;width:1px;height:732px;background:#8f8f8f"></div>
<div class="rn" style="top:202px">1</div>
<div class="rn" style="top:219px">2</div>
<div class="rn" style="top:236px">3</div>
<div class="rn" style="top:253px">4</div>
<div class="rn" style="top:270px">5</div>
<div class="rn" style="top:287px">6</div>
<div class="rn" style="top:304px">7</div>
<div class="rn" style="top:321px">8</div>
<div class="rn" style="top:338px">9</div>
<div class="rn" style="top:355px">10</div>
<div class="rn" style="top:372px">11</div>
<div class="rn" style="top:389px">12</div>
<div class="rn" style="top:406px">13</div>
<div class="rn" style="top:423px">14</div>
<div class="rn" style="top:440px">15</div>
<div class="rn" style="top:457px">16</div>
<div class="rn" style="top:474px">17</div>
<div class="rn" style="top:491px">18</div>
<div class="rn" style="top:508px">19</div>
<div class="rn" style="top:525px">20</div>
<div class="rn" style="top:542px">21</div>
<div class="rn" style="top:559px">22</div>
<div class="rn" style="top:576px">23</div>
<div class="rn" style="top:593px">24</div>
<div class="rn" style="top:610px">25</div>
<div class="rn" style="top:627px">26</div>
<div class="rn" style="top:644px">27</div>
<div class="rn" style="top:661px">28</div>
<div class="rn" style="top:678px">29</div>
<div class="rn" style="top:695px">30</div>
<div class="rn" style="top:712px">31</div>
<div class="rn" style="top:729px">32</div>
<div class="rn" style="top:746px">33</div>
<div class="rn" style="top:763px">34</div>
<div class="rn" style="top:780px">35</div>
<div class="rn" style="top:797px">36</div>
<div class="rn" style="top:814px">37</div>
<div class="rn" style="top:831px">38</div>
<div class="rn" style="top:848px">39</div>
<div class="rn" style="top:865px">40</div>
<div class="rn" style="top:882px">41</div>
<div class="rn" style="top:899px">42</div>
<div class="rn" style="top:916px">43</div>
<div class="c n" style="left:14px;top:202px;width:116px;letter-spacing:-0.64px">USSTK0001000OODL</div>
<div class="c n" style="left:14px;top:219px;width:116px;letter-spacing:-0.64px">USSTK0003000OODL</div>
<div class="c n" style="left:187px;top:219px;width:119px;letter-spacing:-0.30px">Nome</div>
<div class="c n" style="left:308px;top:219px;width:120px;padding-left:1px;letter-spacing:-0.16px">EUA - Dow Jones Industrial Average</div>
<div class="c n" style="left:430px;top:219px;width:120px;padding-left:1px;letter-spacing:-0.45px">EUA - SP500</div>
<div class="c n" style="left:552px;top:219px;width:120px;padding-left:1px;letter-spacing:-0.54px">COL - Índice COLCAP</div>
<div class="c n" style="left:674px;top:219px;width:120px;padding-left:1px;letter-spacing:-0.34px">EU - STOXX 50 Volatility</div>
<div class="c n" style="left:796px;top:219px;width:120px;padding-left:1px;letter-spacing:-0.33px">CHN -  Índice Composto SSE</div>
<div class="c n" style="left:918px;top:219px;width:120px;padding-left:1px;letter-spacing:-0.06px">Ibovespa</div>
<div class="c n" style="left:1040px;top:219px;width:120px;padding-left:1px;letter-spacing:-0.20px">EU - Volatility Indexes - VIX</div>
<div class="c n" style="left:1162px;top:219px;width:120px;padding-left:1px;letter-spacing:-0.52px">MEX - Índice S&amp;P/BMV IPC</div>
<div class="c n" style="left:1284px;top:219px;width:399px;padding-left:1px;letter-spacing:-0.32px">VEN - Índice IBC Caracas</div>
<div class="c n" style="left:14px;top:236px;width:116px;letter-spacing:-0.65px">COSTK0008000OODL</div>
<div class="c n" style="left:187px;top:236px;width:119px;letter-spacing:0.07px">Tag</div>
<div class="c n" style="left:308px;top:236px;width:120px;padding-left:1px;letter-spacing:0.00px">fs_dow_jones_ind_average_us</div>
<div class="c n" style="left:430px;top:236px;width:120px;padding-left:1px;letter-spacing:0.00px">fs_sp500_us_619</div>
<div class="c n" style="left:552px;top:236px;width:120px;padding-left:1px;letter-spacing:0.00px">fs_col_colcap_co_795</div>
<div class="c n" style="left:674px;top:236px;width:120px;padding-left:1px;letter-spacing:0.00px">fs_stoxx_50_volatility_eu_</div>
<div class="c n" style="left:796px;top:236px;width:120px;padding-left:1px;letter-spacing:0.00px">fs_ssec_cn_102</div>
<div class="c n" style="left:918px;top:236px;width:120px;padding-left:1px;letter-spacing:0.05px">fs_ibov_br_11382</div>
<div class="c n" style="left:1040px;top:236px;width:120px;padding-left:1px;letter-spacing:0.00px">fs_eu_volatility_ind__eu_</div>
<div class="c n" style="left:1162px;top:236px;width:120px;padding-left:1px;letter-spacing:0.00px">fs_mex_ipc_mx_1567</div>
<div class="c n" style="left:1284px;top:236px;width:399px;padding-left:1px;letter-spacing:0.00px">fs_vem_ibc_caracas_ve_7</div>
<div class="c n" style="left:14px;top:253px;width:116px;letter-spacing:-0.64px">EUSTK0010000OODL</div>
<div class="c n" style="left:187px;top:253px;width:119px;letter-spacing:-0.20px">Região</div>
<div class="c n" style="left:308px;top:253px;width:120px;padding-left:1px;letter-spacing:-0.11px">Estados Unidos da América</div>
<div class="c n" style="left:430px;top:253px;width:120px;padding-left:1px;letter-spacing:-0.11px">Estados Unidos da América</div>
<div class="c n" style="left:552px;top:253px;width:120px;padding-left:1px;letter-spacing:-0.15px">Colômbia</div>
<div class="c n" style="left:674px;top:253px;width:120px;padding-left:1px;letter-spacing:-0.16px">União Europeia</div>
<div class="c n" style="left:796px;top:253px;width:120px;padding-left:1px;letter-spacing:-0.24px">China</div>
<div class="c n" style="left:918px;top:253px;width:120px;padding-left:1px;letter-spacing:-0.18px">Brasil</div>
<div class="c n" style="left:1040px;top:253px;width:120px;padding-left:1px;letter-spacing:-0.16px">União Europeia</div>
<div class="c n" style="left:1162px;top:253px;width:120px;padding-left:1px;letter-spacing:-0.23px">México</div>
<div class="c n" style="left:1284px;top:253px;width:399px;padding-left:1px;letter-spacing:-0.05px">Venezuela</div>
<div class="c n" style="left:14px;top:270px;width:116px;letter-spacing:-0.64px">CNSTK0001000OODL</div>
<div class="c n" style="left:187px;top:270px;width:119px;letter-spacing:-0.10px">Frequência</div>
<div class="c n" style="left:308px;top:270px;width:120px;padding-left:1px;letter-spacing:-0.20px">Diário</div>
<div class="c n" style="left:430px;top:270px;width:120px;padding-left:1px;letter-spacing:-0.20px">Diário</div>
<div class="c n" style="left:552px;top:270px;width:120px;padding-left:1px;letter-spacing:-0.20px">Diário</div>
<div class="c n" style="left:674px;top:270px;width:120px;padding-left:1px;letter-spacing:-0.20px">Diário</div>
<div class="c n" style="left:796px;top:270px;width:120px;padding-left:1px;letter-spacing:-0.20px">Diário</div>
<div class="c n" style="left:918px;top:270px;width:120px;padding-left:1px;letter-spacing:-0.20px">Diário</div>
<div class="c n" style="left:1040px;top:270px;width:120px;padding-left:1px;letter-spacing:-0.20px">Diário</div>
<div class="c n" style="left:1162px;top:270px;width:120px;padding-left:1px;letter-spacing:-0.20px">Diário</div>
<div class="c n" style="left:1284px;top:270px;width:399px;padding-left:1px;letter-spacing:-0.20px">Diário</div>
<div class="c n" style="left:14px;top:287px;width:116px;letter-spacing:-0.64px">BRSTK0005000OODL</div>
<div class="c n" style="left:187px;top:287px;width:119px;letter-spacing:-0.03px">Transformação primária</div>
<div class="c n" style="left:308px;top:287px;width:120px;padding-left:1px;letter-spacing:-0.16px">Original</div>
<div class="c n" style="left:430px;top:287px;width:120px;padding-left:1px;letter-spacing:-0.16px">Original</div>
<div class="c n" style="left:552px;top:287px;width:120px;padding-left:1px;letter-spacing:-0.16px">Original</div>
<div class="c n" style="left:674px;top:287px;width:120px;padding-left:1px;letter-spacing:-0.16px">Original</div>
<div class="c n" style="left:796px;top:287px;width:120px;padding-left:1px;letter-spacing:-0.16px">Original</div>
<div class="c n" style="left:918px;top:287px;width:120px;padding-left:1px;letter-spacing:-0.16px">Original</div>
<div class="c n" style="left:1040px;top:287px;width:120px;padding-left:1px;letter-spacing:-0.16px">Original</div>
<div class="c n" style="left:1162px;top:287px;width:120px;padding-left:1px;letter-spacing:-0.16px">Original</div>
<div class="c n" style="left:1284px;top:287px;width:399px;padding-left:1px;letter-spacing:-0.16px">Original</div>
<div class="c n" style="left:14px;top:304px;width:116px;letter-spacing:-0.64px">EUSTK0005000OODL</div>
<div class="c n" style="left:187px;top:304px;width:119px;letter-spacing:-0.03px">Transformação secundária</div>
<div class="c n" style="left:308px;top:304px;width:120px;padding-left:1px;letter-spacing:-0.24px">Nível</div>
<div class="c n" style="left:430px;top:304px;width:120px;padding-left:1px;letter-spacing:-0.24px">Nível</div>
<div class="c n" style="left:552px;top:304px;width:120px;padding-left:1px;letter-spacing:-0.24px">Nível</div>
<div class="c n" style="left:674px;top:304px;width:120px;padding-left:1px;letter-spacing:-0.24px">Nível</div>
<div class="c n" style="left:796px;top:304px;width:120px;padding-left:1px;letter-spacing:-0.24px">Nível</div>
<div class="c n" style="left:918px;top:304px;width:120px;padding-left:1px;letter-spacing:-0.24px">Nível</div>
<div class="c n" style="left:1040px;top:304px;width:120px;padding-left:1px;letter-spacing:-0.24px">Nível</div>
<div class="c n" style="left:1162px;top:304px;width:120px;padding-left:1px;letter-spacing:-0.24px">Nível</div>
<div class="c n" style="left:1284px;top:304px;width:399px;padding-left:1px;letter-spacing:-0.24px">Nível</div>
<div class="c n" style="left:14px;top:321px;width:116px;letter-spacing:-0.65px">MXSTK0010000OODL</div>
<div class="c n" style="left:187px;top:321px;width:119px;letter-spacing:-0.20px">Fonte</div>
<div class="c n" style="left:308px;top:321px;width:120px;padding-left:1px;letter-spacing:-0.25px">Fred</div>
<div class="c n" style="left:430px;top:321px;width:120px;padding-left:1px;letter-spacing:-0.25px">Fred</div>
<div class="c n" style="left:552px;top:321px;width:120px;padding-left:1px;letter-spacing:-1.13px">BVC</div>
<div class="c n" style="left:674px;top:321px;width:120px;padding-left:1px;letter-spacing:-0.10px">Yahoo Finance</div>
<div class="c n" style="left:796px;top:321px;width:120px;padding-left:1px;letter-spacing:-0.10px">Yahoo Finance</div>
<div class="c n" style="left:918px;top:321px;width:120px;padding-left:1px;letter-spacing:-0.55px">B3</div>
<div class="c n" style="left:1040px;top:321px;width:120px;padding-left:1px;letter-spacing:-0.16px">Chicago Board Options Exchange</div>
<div class="c n" style="left:1162px;top:321px;width:120px;padding-left:1px;letter-spacing:-1.19px">BMV</div>
<div class="c n" style="left:1284px;top:321px;width:399px;padding-left:1px;letter-spacing:-0.15px">Caracas Stock Exchange</div>
<div class="c n" style="left:14px;top:338px;width:116px;letter-spacing:-0.63px">VESTK0012000OODL</div>
<div class="c n" style="left:187px;top:338px;width:119px;letter-spacing:-0.06px">Última data histórica</div>
<div class="c n" style="left:308px;top:338px;width:120px;padding-left:1px;letter-spacing:0.08px">28/11/2025</div>
<div class="c n" style="left:430px;top:338px;width:120px;padding-left:1px;letter-spacing:0.08px">28/11/2025</div>
<div class="c n" style="left:552px;top:338px;width:120px;padding-left:1px;letter-spacing:0.00px">25/12/2019</div>
<div class="c n" style="left:674px;top:338px;width:120px;padding-left:1px;letter-spacing:0.08px">28/11/2025</div>
<div class="c n" style="left:796px;top:338px;width:120px;padding-left:1px;letter-spacing:0.08px">28/11/2025</div>
<div class="c n" style="left:918px;top:338px;width:120px;padding-left:1px;letter-spacing:0.08px">27/11/2025</div>
<div class="c n" style="left:1040px;top:338px;width:120px;padding-left:1px;letter-spacing:0.08px">28/11/2025</div>
<div class="c n" style="left:1162px;top:338px;width:120px;padding-left:1px;letter-spacing:0.08px">28/11/2025</div>
<div class="c n" style="left:1284px;top:338px;width:399px;padding-left:1px;letter-spacing:0.08px">28/11/2025</div>
<div class="c n" style="left:187px;top:355px;width:119px;letter-spacing:-0.05px">Última data atualizada</div>
<div class="c n" style="left:308px;top:355px;width:120px;padding-left:1px;letter-spacing:0.00px">01/12/2025</div>
<div class="c n" style="left:430px;top:355px;width:120px;padding-left:1px;letter-spacing:0.00px">01/12/2025</div>
<div class="c n" style="left:552px;top:355px;width:120px;padding-left:1px;letter-spacing:0.00px">18/09/2025</div>
<div class="c n" style="left:674px;top:355px;width:120px;padding-left:1px;letter-spacing:0.00px">01/12/2025</div>
<div class="c n" style="left:796px;top:355px;width:120px;padding-left:1px;letter-spacing:0.00px">01/12/2025</div>
<div class="c n" style="left:918px;top:355px;width:120px;padding-left:1px;letter-spacing:0.08px">28/11/2025</div>
<div class="c n" style="left:1040px;top:355px;width:120px;padding-left:1px;letter-spacing:0.08px">29/11/2025</div>
<div class="c n" style="left:1162px;top:355px;width:120px;padding-left:1px;letter-spacing:0.08px">29/11/2025</div>
<div class="c n" style="left:1284px;top:355px;width:399px;padding-left:1px;letter-spacing:0.08px">29/11/2025</div>
<div class="c n" style="left:187px;top:372px;width:119px;letter-spacing:-0.17px">Unidade</div>
<div class="c n" style="left:308px;top:372px;width:120px;padding-left:1px;letter-spacing:-0.13px">Número Índice</div>
<div class="c n" style="left:430px;top:372px;width:120px;padding-left:1px;letter-spacing:-0.13px">Número Índice</div>
<div class="c n" style="left:552px;top:372px;width:120px;padding-left:1px;letter-spacing:-0.13px">Número Índice</div>
<div class="c n" style="left:674px;top:372px;width:120px;padding-left:1px;letter-spacing:-0.13px">Número Índice</div>
<div class="c n" style="left:796px;top:372px;width:120px;padding-left:1px;letter-spacing:-0.08px">Índice</div>
<div class="c n" style="left:918px;top:372px;width:120px;padding-left:1px;letter-spacing:-0.13px">Número Índice</div>
<div class="c n" style="left:1040px;top:372px;width:120px;padding-left:1px;letter-spacing:-0.11px">Ponto base</div>
<div class="c n" style="left:1162px;top:372px;width:120px;padding-left:1px;letter-spacing:-0.13px">Número Índice</div>
<div class="c n" style="left:1284px;top:372px;width:399px;padding-left:1px;letter-spacing:-0.13px">Número Índice</div>
<div class="c n" style="left:187px;top:389px;width:119px;letter-spacing:-0.30px">Data</div>
<div class="c n" style="left:308px;top:389px;width:120px;padding-left:1px;letter-spacing:-0.64px">USSTK0001000OODL</div>
<div class="c n" style="left:430px;top:389px;width:120px;padding-left:1px;letter-spacing:-0.64px">USSTK0003000OODL</div>
<div class="c n" style="left:552px;top:389px;width:120px;padding-left:1px;letter-spacing:-0.65px">COSTK0008000OODL</div>
<div class="c n" style="left:674px;top:389px;width:120px;padding-left:1px;letter-spacing:-0.64px">EUSTK0010000OODL</div>
<div class="c n" style="left:796px;top:389px;width:120px;padding-left:1px;letter-spacing:-0.64px">CNSTK0001000OODL</div>
<div class="c n" style="left:918px;top:389px;width:120px;padding-left:1px;letter-spacing:-0.64px">BRSTK0005000OODL</div>
<div class="c n" style="left:1040px;top:389px;width:120px;padding-left:1px;letter-spacing:-0.64px">EUSTK0005000OODL</div>
<div class="c n" style="left:1162px;top:389px;width:120px;padding-left:1px;letter-spacing:-0.65px">MXSTK0010000OODL</div>
<div class="c n" style="left:1284px;top:389px;width:399px;padding-left:1px;letter-spacing:-0.63px">VESTK0012000OODL</div>
<div class="c" style="left:187px;top:406px;width:118px">01/10/2025</div>
<div class="c r" style="left:307px;top:406px;width:119px">46441.1</div>
<div class="c r" style="left:429px;top:406px;width:119px">6711.2</div>
<div class="c r" style="left:673px;top:406px;width:119px">16.4721</div>
<div class="c r" style="left:917px;top:406px;width:119px">145517.35</div>
<div class="c r" style="left:1039px;top:406px;width:119px">16.4721</div>
<div class="c r" style="left:1161px;top:406px;width:119px">61929.72</div>
<div class="c r" style="left:1283px;top:406px;width:119px">1053.52</div>
<div class="c" style="left:187px;top:423px;width:118px">02/10/2025</div>
<div class="c r" style="left:307px;top:423px;width:119px">46519.72</div>
<div class="c r" style="left:429px;top:423px;width:119px">6715.35</div>
<div class="c r" style="left:673px;top:423px;width:119px">16.8099</div>
<div class="c r" style="left:917px;top:423px;width:119px">143949.64</div>
<div class="c r" style="left:1039px;top:423px;width:119px">16.8099</div>
<div class="c r" style="left:1161px;top:423px;width:119px">62220.31</div>
<div class="c r" style="left:1283px;top:423px;width:119px">1058.57</div>
<div class="c" style="left:187px;top:440px;width:118px">03/10/2025</div>
<div class="c r" style="left:307px;top:440px;width:119px">46758.28</div>
<div class="c r" style="left:429px;top:440px;width:119px">6715.79</div>
<div class="c r" style="left:673px;top:440px;width:119px">16.0879</div>
<div class="c r" style="left:917px;top:440px;width:119px">144200.65</div>
<div class="c r" style="left:1039px;top:440px;width:119px">16.0879</div>
<div class="c r" style="left:1161px;top:440px;width:119px">61984.43</div>
<div class="c r" style="left:1283px;top:440px;width:119px">1114.73</div>
<div class="c" style="left:187px;top:457px;width:118px">06/10/2025</div>
<div class="c r" style="left:307px;top:457px;width:119px">46694.97</div>
<div class="c r" style="left:429px;top:457px;width:119px">6740.28</div>
<div class="c r" style="left:673px;top:457px;width:119px">17.722</div>
<div class="c r" style="left:917px;top:457px;width:119px">143608.08</div>
<div class="c r" style="left:1039px;top:457px;width:119px">17.722</div>
<div class="c r" style="left:1161px;top:457px;width:119px">60404.19</div>
<div class="c r" style="left:1283px;top:457px;width:119px">1102.03</div>
<div class="c" style="left:187px;top:474px;width:118px">07/10/2025</div>
<div class="c r" style="left:307px;top:474px;width:119px">46602.98</div>
<div class="c r" style="left:429px;top:474px;width:119px">6714.59</div>
<div class="c r" style="left:673px;top:474px;width:119px">18.1863</div>
<div class="c r" style="left:917px;top:474px;width:119px">141356.43</div>
<div class="c r" style="left:1039px;top:474px;width:119px">18.1863</div>
<div class="c r" style="left:1161px;top:474px;width:119px">60215.75</div>
<div class="c r" style="left:1283px;top:474px;width:119px">1118.62</div>
<div class="c" style="left:187px;top:491px;width:118px">08/10/2025</div>
<div class="c r" style="left:307px;top:491px;width:119px">46601.78</div>
<div class="c r" style="left:429px;top:491px;width:119px">6753.72</div>
<div class="c r" style="left:673px;top:491px;width:119px">17.5164</div>
<div class="c r" style="left:917px;top:491px;width:119px">142145.38</div>
<div class="c r" style="left:1039px;top:491px;width:119px">17.5164</div>
<div class="c r" style="left:1161px;top:491px;width:119px">60888.56</div>
<div class="c r" style="left:1283px;top:491px;width:119px">1092.27</div>
<div class="c" style="left:187px;top:508px;width:118px">09/10/2025</div>
<div class="c r" style="left:307px;top:508px;width:119px">46358.42</div>
<div class="c r" style="left:429px;top:508px;width:119px">6735.11</div>
<div class="c r" style="left:673px;top:508px;width:119px">17.2077</div>
<div class="c r" style="left:795px;top:508px;width:119px">3933.971924</div>
<div class="c r" style="left:917px;top:508px;width:119px">141708.19</div>
<div class="c r" style="left:1039px;top:508px;width:119px">17.2077</div>
<div class="c r" style="left:1161px;top:508px;width:119px">60819.31</div>
<div class="c r" style="left:1283px;top:508px;width:119px">1106.64</div>
<div class="c" style="left:187px;top:525px;width:118px">10/10/2025</div>
<div class="c r" style="left:307px;top:525px;width:119px">45479.6</div>
<div class="c r" style="left:429px;top:525px;width:119px">6552.51</div>
<div class="c r" style="left:673px;top:525px;width:119px">19.5951</div>
<div class="c r" style="left:795px;top:525px;width:119px">3897.028076</div>
<div class="c r" style="left:917px;top:525px;width:119px">140680.34</div>
<div class="c r" style="left:1039px;top:525px;width:119px">19.5951</div>
<div class="c r" style="left:1161px;top:525px;width:119px">60568.93</div>
<div class="c r" style="left:1283px;top:525px;width:119px">1135.16</div>
<div class="c" style="left:187px;top:542px;width:118px">13/10/2025</div>
<div class="c r" style="left:307px;top:542px;width:119px">46067.58</div>
<div class="c r" style="left:429px;top:542px;width:119px">6654.72</div>
<div class="c r" style="left:673px;top:542px;width:119px">19.677</div>
<div class="c r" style="left:795px;top:542px;width:119px">3889.501953</div>
<div class="c r" style="left:917px;top:542px;width:119px">141783.36</div>
<div class="c r" style="left:1039px;top:542px;width:119px">19.677</div>
<div class="c r" style="left:1161px;top:542px;width:119px">61045.09</div>
<div class="c r" style="left:1283px;top:542px;width:119px">1168.38</div>
<div class="c" style="left:187px;top:559px;width:118px">14/10/2025</div>
<div class="c r" style="left:307px;top:559px;width:119px">46270.46</div>
<div class="c r" style="left:429px;top:559px;width:119px">6644.31</div>
<div class="c r" style="left:673px;top:559px;width:119px">20.4203</div>
<div class="c r" style="left:795px;top:559px;width:119px">3865.229004</div>
<div class="c r" style="left:917px;top:559px;width:119px">141682.99</div>
<div class="c r" style="left:1039px;top:559px;width:119px">20.4203</div>
<div class="c r" style="left:1161px;top:559px;width:119px">60785.62</div>
<div class="c r" style="left:1283px;top:559px;width:119px">1200.7</div>
<div class="c" style="left:187px;top:576px;width:118px">15/10/2025</div>
<div class="c r" style="left:307px;top:576px;width:119px">46253.31</div>
<div class="c r" style="left:429px;top:576px;width:119px">6671.06</div>
<div class="c r" style="left:673px;top:576px;width:119px">19.1624</div>
<div class="c r" style="left:795px;top:576px;width:119px">3912.208984</div>
<div class="c r" style="left:917px;top:576px;width:119px">142603.66</div>
<div class="c r" style="left:1039px;top:576px;width:119px">19.1624</div>
<div class="c r" style="left:1161px;top:576px;width:119px">61637.54</div>
<div class="c r" style="left:1283px;top:576px;width:119px">1319.37</div>
<div class="c" style="left:187px;top:593px;width:118px">16/10/2025</div>
<div class="c r" style="left:307px;top:593px;width:119px">45952.24</div>
<div class="c r" style="left:429px;top:593px;width:119px">6629.07</div>
<div class="c r" style="left:673px;top:593px;width:119px">19.4014</div>
<div class="c r" style="left:795px;top:593px;width:119px">3916.228027</div>
<div class="c r" style="left:917px;top:593px;width:119px">142200.02</div>
<div class="c r" style="left:1039px;top:593px;width:119px">19.4014</div>
<div class="c r" style="left:1161px;top:593px;width:119px">62544.56</div>
<div class="c r" style="left:1283px;top:593px;width:119px">1416.04</div>
<div class="c" style="left:187px;top:610px;width:118px">17/10/2025</div>
<div class="c r" style="left:307px;top:610px;width:119px">46190.61</div>
<div class="c r" style="left:429px;top:610px;width:119px">6664.01</div>
<div class="c r" style="left:673px;top:610px;width:119px">20.2369</div>
<div class="c r" style="left:795px;top:610px;width:119px">3839.754883</div>
<div class="c r" style="left:917px;top:610px;width:119px">143398.63</div>
<div class="c r" style="left:1039px;top:610px;width:119px">20.2369</div>
<div class="c r" style="left:1161px;top:610px;width:119px">61743.92</div>
<div class="c r" style="left:1283px;top:610px;width:119px">1466.28</div>
<div class="c" style="left:187px;top:627px;width:118px">20/10/2025</div>
<div class="c r" style="left:307px;top:627px;width:119px">46706.58</div>
<div class="c r" style="left:429px;top:627px;width:119px">6735.13</div>
<div class="c r" style="left:673px;top:627px;width:119px">17.2249</div>
<div class="c r" style="left:795px;top:627px;width:119px">3863.893066</div>
<div class="c r" style="left:917px;top:627px;width:119px">144509.32</div>
<div class="c r" style="left:1039px;top:627px;width:119px">17.2249</div>
<div class="c r" style="left:1161px;top:627px;width:119px">61672.35</div>
<div class="c r" style="left:1283px;top:627px;width:119px">1466.28</div>
<div class="c" style="left:187px;top:644px;width:118px">21/10/2025</div>
<div class="c r" style="left:307px;top:644px;width:119px">46924.74</div>
<div class="c r" style="left:429px;top:644px;width:119px">6735.35</div>
<div class="c r" style="left:673px;top:644px;width:119px">16.8686</div>
<div class="c r" style="left:795px;top:644px;width:119px">3916.332031</div>
<div class="c r" style="left:917px;top:644px;width:119px">144085.15</div>
<div class="c r" style="left:1039px;top:644px;width:119px">16.8686</div>
<div class="c r" style="left:1161px;top:644px;width:119px">60773.78</div>
<div class="c r" style="left:1283px;top:644px;width:119px">1465.01</div>
<div class="c" style="left:187px;top:661px;width:118px">22/10/2025</div>
<div class="c r" style="left:307px;top:661px;width:119px">46590.41</div>
<div class="c r" style="left:429px;top:661px;width:119px">6699.4</div>
<div class="c r" style="left:673px;top:661px;width:119px">17.7501</div>
<div class="c r" style="left:795px;top:661px;width:119px">3913.758057</div>
<div class="c r" style="left:917px;top:661px;width:119px">144872.79</div>
<div class="c r" style="left:1039px;top:661px;width:119px">17.7501</div>
<div class="c r" style="left:1161px;top:661px;width:119px">61308.2</div>
<div class="c r" style="left:1283px;top:661px;width:119px">1473.2</div>
<div class="c" style="left:187px;top:678px;width:118px">23/10/2025</div>
<div class="c r" style="left:307px;top:678px;width:119px">46734.61</div>
<div class="c r" style="left:429px;top:678px;width:119px">6738.44</div>
<div class="c r" style="left:673px;top:678px;width:119px">17.1344</div>
<div class="c r" style="left:795px;top:678px;width:119px">3922.409912</div>
<div class="c r" style="left:917px;top:678px;width:119px">145720.98</div>
<div class="c r" style="left:1039px;top:678px;width:119px">17.1344</div>
<div class="c r" style="left:1161px;top:678px;width:119px">61511.95</div>
<div class="c r" style="left:1283px;top:678px;width:119px">1608.92</div>
<div class="c" style="left:187px;top:695px;width:118px">24/10/2025</div>
<div class="c r" style="left:307px;top:695px;width:119px">47207.12</div>
<div class="c r" style="left:429px;top:695px;width:119px">6791.69</div>
<div class="c r" style="left:673px;top:695px;width:119px">16.4822</div>
<div class="c r" style="left:795px;top:695px;width:119px">3950.312012</div>
<div class="c r" style="left:917px;top:695px;width:119px">146172.21</div>
<div class="c r" style="left:1039px;top:695px;width:119px">16.4822</div>
<div class="c r" style="left:1161px;top:695px;width:119px">61145.49</div>
<div class="c r" style="left:1283px;top:695px;width:119px">1631.36</div>
<div class="c" style="left:187px;top:712px;width:118px">27/10/2025</div>
<div class="c r" style="left:307px;top:712px;width:119px">47544.59</div>
<div class="c r" style="left:429px;top:712px;width:119px">6875.16</div>
<div class="c r" style="left:673px;top:712px;width:119px">16.3429</div>
<div class="c r" style="left:795px;top:712px;width:119px">3996.945068</div>
<div class="c r" style="left:917px;top:712px;width:119px">146969.1</div>
<div class="c r" style="left:1039px;top:712px;width:119px">16.3429</div>
<div class="c r" style="left:1161px;top:712px;width:119px">61860.3</div>
<div class="c r" style="left:1283px;top:712px;width:119px">1653.41</div>
<div class="c" style="left:187px;top:729px;width:118px">28/10/2025</div>
<div class="c r" style="left:307px;top:729px;width:119px">47706.37</div>
<div class="c r" style="left:429px;top:729px;width:119px">6890.89</div>
<div class="c r" style="left:673px;top:729px;width:119px">16.4372</div>
<div class="c r" style="left:795px;top:729px;width:119px">3988.224121</div>
<div class="c r" style="left:917px;top:729px;width:119px">147428.9</div>
<div class="c r" style="left:1039px;top:729px;width:119px">16.4372</div>
<div class="c r" style="left:1161px;top:729px;width:119px">62795.24</div>
<div class="c r" style="left:1283px;top:729px;width:119px">1654.87</div>
<div class="c" style="left:187px;top:746px;width:118px">29/10/2025</div>
<div class="c r" style="left:307px;top:746px;width:119px">47632</div>
<div class="c r" style="left:429px;top:746px;width:119px">6890.59</div>
<div class="c r" style="left:673px;top:746px;width:119px">17.0345</div>
<div class="c r" style="left:795px;top:746px;width:119px">4016.331055</div>
<div class="c r" style="left:917px;top:746px;width:119px">148632.93</div>
<div class="c r" style="left:1039px;top:746px;width:119px">17.0345</div>
<div class="c r" style="left:1161px;top:746px;width:119px">63352.85</div>
<div class="c r" style="left:1283px;top:746px;width:119px">1641.74</div>
<div class="c" style="left:187px;top:763px;width:118px">30/10/2025</div>
<div class="c r" style="left:307px;top:763px;width:119px">47522.12</div>
<div class="c r" style="left:429px;top:763px;width:119px">6822.34</div>
<div class="c r" style="left:673px;top:763px;width:119px">16.8744</div>
<div class="c r" style="left:795px;top:763px;width:119px">3986.900879</div>
<div class="c r" style="left:917px;top:763px;width:119px">148780.22</div>
<div class="c r" style="left:1039px;top:763px;width:119px">16.8744</div>
<div class="c r" style="left:1161px;top:763px;width:119px">62889.86</div>
<div class="c r" style="left:1283px;top:763px;width:119px">1600.42</div>
<div class="c" style="left:187px;top:780px;width:118px">31/10/2025</div>
<div class="c r" style="left:307px;top:780px;width:119px">47562.87</div>
<div class="c r" style="left:429px;top:780px;width:119px">6840.2</div>
<div class="c r" style="left:673px;top:780px;width:119px">17.8148</div>
<div class="c r" style="left:795px;top:780px;width:119px">3954.790039</div>
<div class="c r" style="left:917px;top:780px;width:119px">149540.43</div>
<div class="c r" style="left:1039px;top:780px;width:119px">17.8148</div>
<div class="c r" style="left:1161px;top:780px;width:119px">62769.18</div>
<div class="c r" style="left:1283px;top:780px;width:119px">1619.77</div>
<div class="c" style="left:187px;top:797px;width:118px">03/11/2025</div>
<div class="c r" style="left:307px;top:797px;width:119px">47336.68</div>
<div class="c r" style="left:429px;top:797px;width:119px">6851.97</div>
<div class="c r" style="left:673px;top:797px;width:119px">18.1483</div>
<div class="c r" style="left:795px;top:797px;width:119px">3976.520996</div>
<div class="c r" style="left:917px;top:797px;width:119px">150454.24</div>
<div class="c r" style="left:1039px;top:797px;width:119px">18.1483</div>
<div class="c r" style="left:1161px;top:797px;width:119px">62153.3</div>
<div class="c r" style="left:1283px;top:797px;width:119px">1595.66</div>
<div class="c" style="left:187px;top:814px;width:118px">04/11/2025</div>
<div class="c r" style="left:307px;top:814px;width:119px">47085.24</div>
<div class="c r" style="left:429px;top:814px;width:119px">6771.55</div>
<div class="c r" style="left:673px;top:814px;width:119px">18.6285</div>
<div class="c r" style="left:795px;top:814px;width:119px">3960.186035</div>
<div class="c r" style="left:917px;top:814px;width:119px">150704.2</div>
<div class="c r" style="left:1039px;top:814px;width:119px">18.6285</div>
<div class="c r" style="left:1161px;top:814px;width:119px">62390.73</div>
<div class="c r" style="left:1283px;top:814px;width:119px">1606.71</div>
<div class="c" style="left:187px;top:831px;width:118px">05/11/2025</div>
<div class="c r" style="left:307px;top:831px;width:119px">47311</div>
<div class="c r" style="left:429px;top:831px;width:119px">6796.29</div>
<div class="c r" style="left:673px;top:831px;width:119px">17.8904</div>
<div class="c r" style="left:795px;top:831px;width:119px">3969.248047</div>
<div class="c r" style="left:917px;top:831px;width:119px">153294.44</div>
<div class="c r" style="left:1039px;top:831px;width:119px">17.8904</div>
<div class="c r" style="left:1161px;top:831px;width:119px">63378.51</div>
<div class="c r" style="left:1283px;top:831px;width:119px">1633.71</div>
<div class="c" style="left:187px;top:848px;width:118px">06/11/2025</div>
<div class="c r" style="left:307px;top:848px;width:119px">46912.3</div>
<div class="c r" style="left:429px;top:848px;width:119px">6720.32</div>
<div class="c r" style="left:673px;top:848px;width:119px">19.355</div>
<div class="c r" style="left:795px;top:848px;width:119px">4007.76001</div>
<div class="c r" style="left:917px;top:848px;width:119px">153338.63</div>
<div class="c r" style="left:1039px;top:848px;width:119px">19.355</div>
<div class="c r" style="left:1161px;top:848px;width:119px">63093.12</div>
<div class="c r" style="left:1283px;top:848px;width:119px">1617.38</div>
<div class="c" style="left:187px;top:865px;width:118px">07/11/2025</div>
<div class="c r" style="left:307px;top:865px;width:119px">46987.1</div>
<div class="c r" style="left:429px;top:865px;width:119px">6728.8</div>
<div class="c r" style="left:673px;top:865px;width:119px">21.3775</div>
<div class="c r" style="left:795px;top:865px;width:119px">3997.555908</div>
<div class="c r" style="left:917px;top:865px;width:119px">154063.53</div>
<div class="c r" style="left:1039px;top:865px;width:119px">21.3775</div>
<div class="c r" style="left:1161px;top:865px;width:119px">63376.13</div>
<div class="c r" style="left:1283px;top:865px;width:119px">1602.81</div>
<div class="c" style="left:187px;top:882px;width:118px">10/11/2025</div>
<div class="c r" style="left:307px;top:882px;width:119px">47368.63</div>
<div class="c r" style="left:429px;top:882px;width:119px">6832.43</div>
<div class="c r" style="left:673px;top:882px;width:119px">18.4871</div>
<div class="c r" style="left:795px;top:882px;width:119px">4018.596924</div>
<div class="c r" style="left:917px;top:882px;width:119px">155257.31</div>
<div class="c r" style="left:1039px;top:882px;width:119px">18.4871</div>
<div class="c r" style="left:1161px;top:882px;width:119px">63094.01</div>
<div class="c r" style="left:1283px;top:882px;width:119px">1614.45</div>
<div class="c" style="left:187px;top:899px;width:118px">11/11/2025</div>
<div class="c r" style="left:307px;top:899px;width:119px">47927.96</div>
<div class="c r" style="left:429px;top:899px;width:119px">6846.61</div>
<div class="c r" style="left:673px;top:899px;width:119px">17.9533</div>
<div class="c r" style="left:795px;top:899px;width:119px">4002.758057</div>
<div class="c r" style="left:917px;top:899px;width:119px">157748.6</div>
<div class="c r" style="left:1039px;top:899px;width:119px">17.9533</div>
<div class="c r" style="left:1161px;top:899px;width:119px">64321.27</div>
<div class="c r" style="left:1283px;top:899px;width:119px">1593.89</div>
<svg class="a" style="left:0;top:0" width="1890" height="205" viewBox="0 0 1890 205" font-family="Liberation Sans, sans-serif">
<!-- formula bar icons -->
<path d="M82.5 165.5 L87.5 170.5 L92.5 165.5" fill="none" stroke="#ddd" stroke-width="1.1"/>
<g fill="#e0e0e0"><rect x="108" y="161" width="2" height="2"/><rect x="108" y="165.3" width="2" height="2"/><rect x="108" y="169.5" width="2" height="2"/></g>
<path d="M126.5 160.5 L138 171.5 M138 160.5 L126.5 171.5" stroke="#7b8a85" stroke-width="1.1"/>
<path d="M148 166 L152.5 170.8 L164 160.5" fill="none" stroke="#7d7d7d" stroke-width="1.1"/>
<text x="172.5" y="171.5" font-family="Liberation Serif, serif" font-style="italic" font-size="15" fill="#e8e8e8" textLength="14.5" lengthAdjust="spacingAndGlyphs">fx</text>
<path d="M192.5 165 L197.2 169.8 L202 165" fill="none" stroke="#ddd" stroke-width="1.1"/>
<path d="M1884 162 L1888 166 L1892 162" fill="none" stroke="#ddd" stroke-width="1"/>
<!-- corner triangle -->
<path d="M0 198.5 L8.5 190 L8.5 198.5 Z" fill="#e6e6e6"/>
</svg>


<svg class="a" style="left:1537px;top:180px" width="353" height="738" viewBox="1537 180 353 738" font-family="Liberation Sans, sans-serif">
<rect x="1537" y="186" width="353" height="732" fill="#525453"/>
<rect x="1537" y="186" width="3" height="732" fill="#4a4a4a"/>
<path d="M1540 194 Q1540 186 1548.5 186 Q1557 186 1557 194 V918 H1540 Z" fill="#3c3c3c"/>
<path d="M1544.5 198 L1548.5 191.5 L1552.5 198 Z" fill="#c8c8c8"/>
<rect x="1544" y="203" width="9" height="165" rx="4.5" fill="#c6c6c6"/>
<rect x="1557" y="202" width="2.5" height="716" fill="#4a4848"/>
<rect x="1573" y="229" width="1.5" height="689" fill="#3c3c3c"/>
<text x="1573.6" y="215" font-size="15" fill="#fff" stroke="#fff" stroke-width="0.3" textLength="207.4" lengthAdjust="spacingAndGlyphs">Feature Store 4i - Add-in - STG</text>
<path d="M1845.5 205.5 L1852.5 212.5 L1859.5 205.5" fill="none" stroke="#f0f0f0" stroke-width="1.1"/>
<path d="M1880 204 L1890 214 M1890 204 L1880 214" fill="none" stroke="#f0f0f0" stroke-width="1.1"/>
<rect x="1574.5" y="229" width="316" height="689" fill="#f0f0f0"/>
<!-- logo -->
<rect x="1634" y="247" width="37" height="37" rx="2.5" fill="#5b91f6"/>
<g stroke="#fff" stroke-width="3.6" stroke-linecap="round">
<path d="M1645.2 256.9 V267.9"/><path d="M1652.5 256.8 V274.2"/><path d="M1660.1 262.8 V274.2"/>
</g>
<g fill="none" stroke="#0a0a0a" stroke-width="2.8">
<path d="M1680.5 255.6 V268 H1689 M1687.6 260 V274"/>
<path d="M1693.4 260 V274"/>
<path d="M1700.1 274 V260 M1700.1 266 Q1700.1 260.6 1704.8 260.6 Q1709.5 260.6 1709.5 266 V274"/>
<path d="M1716.6 257 V269.5 Q1716.6 272.6 1719.8 272.6 H1721.5 M1713.8 261.4 H1721"/>
<path d="M1724.2 266.8 H1734.9 A5.35 5.55 0 1 0 1733.4 271"/>
<path d="M1740.5 255.5 V268"/>
<path d="M1747 255.5 V274"/>
<path d="M1753.5 260 V274"/>
<circle cx="1764.2" cy="266.8" r="5.3"/>
<path d="M1770.5 260 V275 Q1770.5 279.3 1764.8 279.3 Q1761.3 279.3 1759.4 277.2"/>
<path d="M1775.7 266.8 H1786.4 A5.35 5.55 0 1 0 1784.9 271"/>
<path d="M1792.1 274 V260 M1792.1 266 Q1792.1 260.6 1796.8 260.6 Q1801.5 260.6 1801.5 266 V274"/>
<path d="M1816.6 263.8 A5.5 5.6 0 1 0 1816.6 270.2"/>
<path d="M1821.8 266.8 H1832.5 A5.35 5.55 0 1 0 1831 271"/>
</g>
<rect x="1593" y="302" width="282" height="2" fill="#cbcbcb"/>
<rect x="1705.5" y="314.5" width="57" height="22" rx="2" fill="#efefef" stroke="#767676" stroke-width="1"/>
<text x="1713.6" y="331.3" font-size="13.5" fill="#000" textLength="41.3" lengthAdjust="spacingAndGlyphs">Logout</text>
<rect x="1593" y="347" width="282" height="2" fill="#cbcbcb"/>
<g fill="#333" font-size="14">
<text x="1623" y="378.8" textLength="221.5" lengthAdjust="spacingAndGlyphs">Confira como consultar os dados da</text>
<text x="1626.9" y="397.8" textLength="214.1" lengthAdjust="spacingAndGlyphs">Feature Store diretamente do Excel</text>
</g>
<g fill="#333" font-size="12">
<text x="1599.4" y="424.7" textLength="239.6" lengthAdjust="spacingAndGlyphs">1 - Os códigos das séries devem estar entre o</text>
<text x="1599.4" y="441" textLength="85.3" lengthAdjust="spacingAndGlyphs">range A1 e ALL1</text>
<text x="1599.4" y="466.5" textLength="202" lengthAdjust="spacingAndGlyphs">2 - Clicar em "Consultar Feature Store"</text>
</g>
<rect x="1649" y="484" width="170" height="26.6" rx="6" fill="#5c90f5"/>
<text x="1669" y="502.7" font-size="13" fill="#fff" textLength="130" lengthAdjust="spacingAndGlyphs">Consultar Feature Store</text>
<rect x="1593" y="525" width="282" height="2" fill="#cbcbcb"/>
<g fill="#333" font-size="14">
<text x="1615" y="557" textLength="238" lengthAdjust="spacingAndGlyphs">Para ver nossas fórmulas customizadas</text>
<text x="1661" y="575.4" textLength="145.4" lengthAdjust="spacingAndGlyphs">comece com =FS.LIST( )</text>
</g>
<rect x="1648.7" y="589" width="170" height="26.7" rx="6" fill="#5c90f5"/>
<text x="1682.9" y="608" font-size="13" fill="#fff" textLength="102.5" lengthAdjust="spacingAndGlyphs">Atualizar Formulas</text>
<g fill="#d42f23">
<rect x="1603" y="628" width="13" height="13" rx="2"/>
<rect x="1603" y="657" width="13" height="13" rx="2"/>
<rect x="1603" y="686" width="13" height="13" rx="2"/>
<rect x="1603" y="715" width="13" height="13" rx="2"/>
</g>
<g fill="none" stroke="#fff" stroke-width="2.1" stroke-linejoin="round">
<path d="M1605.3 635.2 L1608.4 638.3 L1613.9 630.8"/>
<path d="M1605.3 664.2 L1608.4 667.3 L1613.9 659.8"/>
<path d="M1605.3 693.2 L1608.4 696.3 L1613.9 688.8"/>
<path d="M1605.3 722.2 L1608.4 725.3 L1613.9 717.8"/>
</g>
<g fill="#222" font-size="12">
<text x="1622.8" y="640.8" textLength="132.7" lengthAdjust="spacingAndGlyphs">Formatar com 2 decimais</text>
<text x="1622.8" y="669.7" textLength="97.2" lengthAdjust="spacingAndGlyphs">Destacar Fórmulas</text>
<text x="1622.8" y="698.7" textLength="99.7" lengthAdjust="spacingAndGlyphs">Destacar Projeções</text>
<text x="1622.8" y="727.7" textLength="230.2" lengthAdjust="spacingAndGlyphs">Destacar Atualizações (somente para séries)</text>
</g>
<rect x="1593" y="746" width="282" height="2" fill="#cbcbcb"/>
<text x="1669" y="778" font-size="13" fill="#1a1a9c" textLength="129.8" lengthAdjust="spacingAndGlyphs">Acesse nosso tutorial</text>
<rect x="1669" y="779.5" width="130" height="1" fill="#1a1a9c"/>
</svg>

</body></html>
